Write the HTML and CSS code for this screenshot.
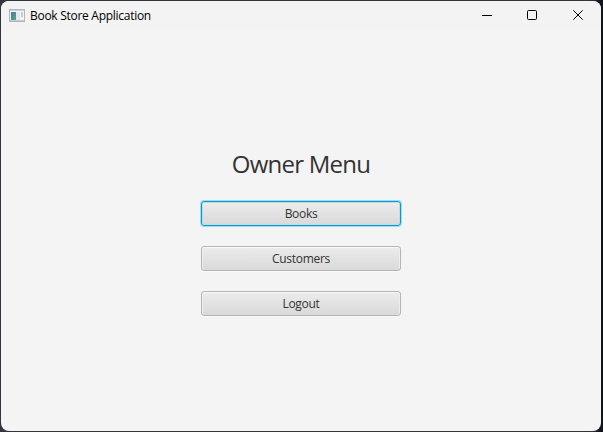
FILE: index.html
```html
<!DOCTYPE html>
<html lang="en">
<head>
<meta charset="utf-8">
<title>Book Store Application</title>
<link rel="stylesheet" href="styles.css">
</head>
<body>
<div class="window">
  <header class="titlebar">
    <svg class="app-icon" width="16" height="14" viewBox="0 0 16 14">
      <defs><linearGradient id="pane" x1="0" y1="0" x2="1" y2="1"><stop offset="0" stop-color="#4578a8"/><stop offset="1" stop-color="#50b078"/></linearGradient></defs>
      <rect x=".5" y=".5" width="15" height="12" fill="#f4f5f6" stroke="#b1b5b8"/>
      <path d="M1 1.5h14" stroke="#cdd3d8"/>
      <rect x="2" y="3" width="5" height="8" fill="url(#pane)"/>
      <rect x="7" y="3" width="4" height="8" fill="#e6e8ed"/>
      <rect x="12" y="3" width="2" height="3" fill="#b9cfe4"/>
      <rect x="12" y="5" width="2" height="3" fill="#b3dab9"/>
      <path d="M1 11.5h14" stroke="#c5c9cc"/>
    </svg>
    <span class="title">Book Store Application</span>
    <div class="controls">
      <svg width="46" height="29" viewBox="0 0 46 29"><path d="M19 14.5h10" stroke="#000"/></svg>
      <svg width="46" height="29" viewBox="0 0 46 29"><rect x="18.5" y="9.5" width="9" height="9" rx="1" fill="none" stroke="#000"/></svg>
      <svg width="46" height="29" viewBox="0 0 46 29"><path d="M18.3 9.3l9.4 9.4M27.7 9.3l-9.4 9.4" stroke="#000" fill="none"/></svg>
    </div>
  </header>
  <main class="menu">
    <h1 class="heading">Owner Menu</h1>
    <button class="button focused"><span>Books</span></button>
    <button class="button"><span>Customers</span></button>
    <button class="button"><span>Logout</span></button>
  </main>
</div>
</body>
</html>
```
FILE: styles.css
```css
* { box-sizing: border-box; }
body {
  margin: 0;
  width: 603px;
  height: 432px;
  padding: 1px 2px 1px 1px;
  overflow: hidden;
  background: linear-gradient(90deg, #35333b 0 590px, #10151d 600px);
  font-family: "Open Sans", "Noto Sans", sans-serif;
}
.window {
  height: 430px;
  display: flex;
  flex-direction: column;
  background: #f4f4f4;
  border-radius: 8px;
  overflow: hidden;
}
.titlebar {
  height: 29px;
  display: flex;
  align-items: center;
  padding-left: 8px;
  background: #f3f3f3;
}
.app-icon { flex: none; }
.title {
  margin-left: 5px;
  font-size: 12px;
  line-height: 16px;
  letter-spacing: -0.28px;
  color: #000;
  white-space: nowrap;
}
.controls { display: flex; margin-left: auto; }
.menu {
  display: flex;
  flex-direction: column;
  align-items: center;
  padding-top: 118px;
}
.heading {
  margin: 0 0 20px;
  font-size: 24px;
  font-weight: 400;
  line-height: 32px;
  letter-spacing: -0.75px;
  color: #333;
}
.button {
  width: 200px;
  height: 25px;
  margin: 1px 0 19px;
  padding: 0;
  border: 1px solid #b5b5b5;
  border-radius: 3px;
  background: linear-gradient(#ececec, #d9d9d9);
  box-shadow: inset 0 1px 0 #f8f8f8, inset 1px 0 0 #eee, inset -1px 0 0 #eee, 0 1px 0 #f9f9f9;
  font: 12px/16px "Open Sans", "Noto Sans", sans-serif;
  letter-spacing: -0.3px;
  color: #333;
}
.focused {
  border-color: #039ed3;
  box-shadow: inset 0 0 0 1px #bfdce6, 0 0 0 1px #a5daed;
}
```
